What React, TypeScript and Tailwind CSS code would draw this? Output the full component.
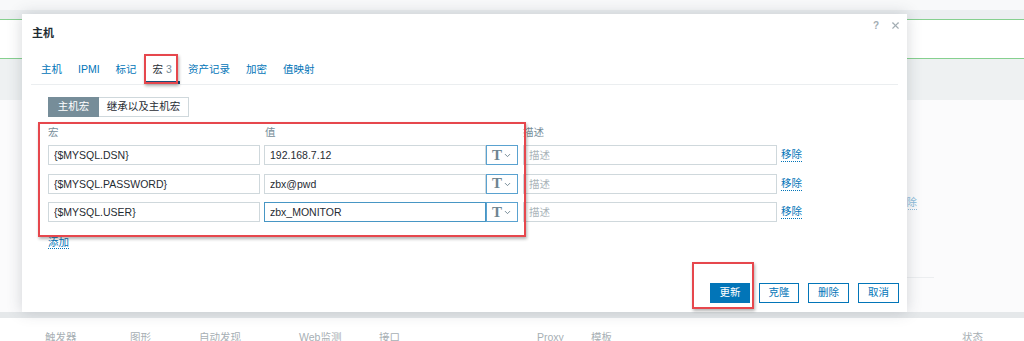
import { ChevronDown, X } from "lucide-react";

const font = "font-['Liberation_Sans','Noto_Sans_CJK_SC',sans-serif]";

const tabs = ["主机", "IPMI", "标记", "宏", "资产记录", "加密", "值映射"];

const macros = [
  { name: "{$MYSQL.DSN}", value: "192.168.7.12", focused: false },
  { name: "{$MYSQL.PASSWORD}", value: "zbx@pwd", focused: false },
  { name: "{$MYSQL.USER}", value: "zbx_MONITOR", focused: true },
];

function MacroRow({ name, value, focused }: { name: string; value: string; focused: boolean }) {
  return (
    <div className="flex items-center h-[20px]">
      <input
        readOnly
        value={name}
        className="w-[212px] h-[20px] border border-[#cfd8dc] px-[5px] text-[#1f2c33] outline-none"
      />
      <input
        readOnly
        value={value}
        className={
          focused
            ? "ml-[4px] w-[222px] h-[20px] border border-[#4796c4] px-[5px] text-[#1f2c33] outline-none"
            : "ml-[4px] w-[222px] h-[20px] border border-[#cfd8dc] px-[5px] text-[#1f2c33] outline-none"
        }
      />
      <div className="w-[32px] h-[20px] border border-[#5aa2d0] flex items-center justify-center gap-[1px] bg-white">
        <span className="font-['Liberation_Serif',serif] font-bold text-[15px] leading-none text-[#6f8591]">T</span>
        <ChevronDown size={9} strokeWidth={2.5} className="text-[#6f8591] mt-[1px]" />
      </div>
      <input
        readOnly
        placeholder="描述"
        className="ml-[5px] w-[254px] h-[20px] border border-[#cfd8dc] px-[5px] text-[#1f2c33] placeholder:text-[#aab4b9] outline-none"
      />
      <a className="ml-[4px] text-[#0275b8] border-b border-dotted border-[#0275b8] leading-[13px]">移除</a>
    </div>
  );
}

export default function App() {
  return (
    <div className={`${font} relative w-[1024px] h-[341px] overflow-hidden bg-white text-[10.5px]`}>
      {/* page behind the dialog */}
      <div className="h-[10px] bg-[#f8f9fa]" />
      <div className="h-[9px] bg-[#eceff1]" />
      <div className="h-[1px] bg-[#86d08f]" />
      <div className="h-[38px] bg-white" />
      <div className="h-[1px] bg-[#86d08f]" />
      <div className="h-[41px] bg-[#eef1f2]" />
      <div className="h-[212px] bg-[#fbfbfc]">
        <div className="h-[95px]" />
        <div className="pl-[896px] h-[16px] flex items-center">
          <span className="text-[#8dbbdb] border-b border-dotted border-[#8dbbdb] leading-[13px]">移除</span>
        </div>
        <div className="mt-[66px] ml-[907px] w-[27px] border-t border-[#eceef0]" />
      </div>
      <div className="h-[6px] bg-[#e5e8ea]" />
      <div className="flex pl-[45px] pt-[12px] text-[#a7afb4] leading-[14px]">
        <div className="w-[85px]">触发器</div>
        <div className="w-[69px]">图形</div>
        <div className="w-[100px]">自动发现</div>
        <div className="w-[80px]">Web监测</div>
        <div className="w-[158px]">接口</div>
        <div className="w-[54px]">Proxy</div>
        <div className="w-[371px]">模板</div>
        <div>状态</div>
      </div>

      {/* dialog */}
      <div className="absolute left-[22px] top-[14px] w-[885px] h-[298px] bg-white shadow-[0_0_14px_rgba(60,70,80,0.22)] flex flex-col px-[9px] pb-[9px] text-[#1f2c33]">
        {/* Header */}
        <div className="h-[38px] flex justify-between">
          <h4 className="self-center pl-[1px] text-[11px] font-bold">主机</h4>
          <div className="flex items-center gap-[11px] mt-[5px] h-[12px] mr-[-3px] text-[#a3adb3]">
            <span className="text-[10px] font-bold">?</span>
            <X size={11} strokeWidth={2.5} />
          </div>
        </div>

        {/* Tabs */}
        <div className="h-[33px] flex items-end pl-[2px] border-b border-[#ebeef0]">
          {tabs.map((t) =>
            t === "宏" ? (
              <div key={t} className="h-[28px] pt-[3px] px-[8px] flex items-center border-b-[3px] border-[#1b4e78]">
                <span className="text-[#1f2c33]">宏</span>
                <span className="ml-[3px] text-[#768d99]">3</span>
              </div>
            ) : (
              <div key={t} className="h-[28px] pt-[3px] px-[8px] flex items-center border-b-[3px] border-transparent text-[#0275b8]">
                {t}
              </div>
            )
          )}
        </div>

        {/* Macros */}
        <div className="pl-[17px]">
          <div className="mt-[12px] flex h-[20px]">
            <div className="w-[51px] flex items-center justify-center bg-[#768d99] border border-[#768d99] text-white">主机宏</div>
            <div className="w-[90px] flex items-center justify-center border border-[#cfd8dc] border-l-0">继承以及主机宏</div>
          </div>

          <div className="mt-[9px] h-[14px] flex items-center text-[#768d99]">
            <div className="w-[217px]">宏</div>
            <div className="w-[258px]">值</div>
            <div>描述</div>
          </div>

          <div className="mt-[5px] flex flex-col gap-[8.5px]">
            {macros.map((m) => (
              <MacroRow key={m.name} {...m} />
            ))}
          </div>

          <div className="mt-[13px] h-[14px] leading-[14px]">
            <a className="text-[#0275b8] border-b border-dotted border-[#0275b8]">添加</a>
          </div>
        </div>

        {/* Footer buttons */}
        <div className="mt-auto flex justify-end gap-[9px] mr-[-1px]">
          <button className="w-[40px] h-[20px] bg-[#0275b8] border border-[#0275b8] text-white">更新</button>
          <button className="w-[40px] h-[20px] bg-white border border-[#0275b8] text-[#0275b8]">克隆</button>
          <button className="w-[41px] h-[20px] bg-white border border-[#0275b8] text-[#0275b8]">删除</button>
          <button className="w-[41px] h-[20px] bg-white border border-[#0275b8] text-[#0275b8]">取消</button>
        </div>

        {/* annotation boxes */}
        <div className="absolute left-[122px] top-[40px] w-[34px] h-[30px] border-2 border-[#e6474d] shadow-[1px_2px_3px_rgba(0,0,0,0.3)]" />
        <div className="absolute left-[16px] top-[108px] w-[488px] h-[115px] border-2 border-[#e6474d] shadow-[1px_2px_3px_rgba(0,0,0,0.3)]" />
        <div className="absolute left-[670px] top-[248px] w-[62px] h-[47px] border-2 border-[#e6474d] shadow-[1px_2px_3px_rgba(0,0,0,0.3)]" />
      </div>
    </div>
  );
}
